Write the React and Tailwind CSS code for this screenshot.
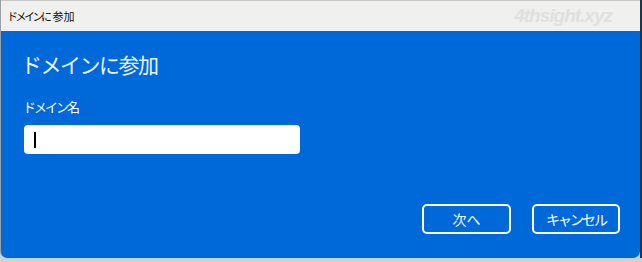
export default function App() {
  const jp = { fontFamily: '"Segoe UI", "Noto Sans CJK JP", sans-serif' };
  return (
    <div className="w-[642px] h-[262px] bg-[#c9d3de] overflow-hidden flex flex-col" style={jp}>
      <div className="flex">
        <div className="w-[640px] h-[258px] flex flex-col rounded-b-[7px] overflow-hidden border-l border-[#9aa0a8] bg-[#0069d9]">
          <div className="h-[31px] bg-[#f0f0ee] flex items-center justify-between pl-[6px] pr-[28px] border-t border-[#c8c8c8]">
            <span className="text-[11px] text-[#111]">
              <span className="tracking-[-2.5px]">ドメインに</span>
              <span className="ml-[3px]">参加</span>
            </span>
            <span className="text-[19px] font-bold italic text-[#e0e0e0] tracking-[-1px]" style={{ fontFamily: '"Liberation Sans", sans-serif' }}>4thsight.xyz</span>
          </div>
          <div className="flex-1 flex flex-col px-[20px] pt-[19px]">
            <div className="text-[21px] leading-[28px] text-[#eef4ff] tracking-[-1.5px]">ドメインに参加</div>
            <div className="mt-[20px] pl-[2px] text-[13px] leading-[18px] text-white tracking-[-2px]">ドメイン名</div>
            <div className="mt-[9px] ml-[3px] w-[276px] h-[29px] bg-white rounded-[4px] flex items-center pl-[10px]">
              <div className="w-[1.5px] h-[16px] bg-black" />
            </div>
            <div className="mt-[50px] flex justify-end gap-[21px]">
              <button className="w-[89px] h-[30px] border-2 border-white rounded-[5px] text-white text-[14px]">次へ</button>
              <button className="w-[88px] h-[30px] border-2 border-white rounded-[5px] text-white text-[14px] tracking-[-2px]">キャンセル</button>
            </div>
          </div>
        </div>
        <div className="w-[2px] h-[258px] bg-[#1f3350]" />
      </div>
      <div className="h-[4px] bg-[#c9d3de]" />
    </div>
  );
}
